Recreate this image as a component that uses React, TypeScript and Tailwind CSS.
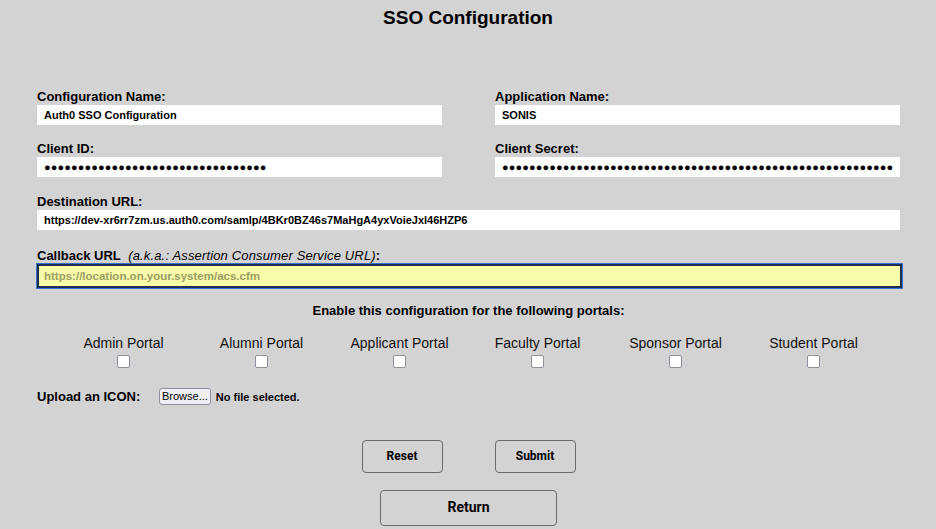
import { useState } from "react";

const portals = [
  "Admin Portal",
  "Alumni Portal",
  "Applicant Portal",
  "Faculty Portal",
  "Sponsor Portal",
  "Student Portal",
];

const labelCls = "block h-4 text-[13px] leading-4 font-bold text-black";
const inputCls =
  "block w-full h-5 bg-white px-[7px] text-[11px] font-bold text-black outline-none font-['Liberation_Sans',Arial,sans-serif]";

function Field({
  label,
  value,
  secret = false,
}: {
  label: string;
  value: string;
  secret?: boolean;
}) {
  return (
    <div>
      <label className={labelCls}>{label}</label>
      <input
        type="text"
        defaultValue={value}
        className={secret ? inputCls + " tracking-[0.1px]" : inputCls}
      />
    </div>
  );
}

export default function App() {
  const [checked, setChecked] = useState<Record<string, boolean>>({});

  return (
    <div className="min-h-[529px] w-[936px] bg-[#d3d3d3] text-black font-['Liberation_Sans',Arial,sans-serif]">
      <h1 className="h-[37px] pt-[6px] text-center text-[19px] leading-6 font-bold">
        SSO Configuration
      </h1>

      <div className="pl-[37px] pr-[36px] pt-[52px]">
        <div className="grid grid-cols-2 gap-x-[53px] gap-y-4">
          <Field label="Configuration Name:" value="Auth0 SSO Configuration" />
          <Field label="Application Name:" value="SONIS" />
          <Field label="Client ID:" value={"●".repeat(33)} secret />
          <Field label="Client Secret:" value={"●".repeat(58)} secret />
        </div>

        <div className="mt-[17px]">
          <label className={labelCls}>Destination URL:</label>
          <input
            type="text"
            defaultValue="https://dev-xr6rr7zm.us.auth0.com/samlp/4BKr0BZ46s7MaHgA4yxVoieJxl46HZP6"
            className={inputCls}
          />
        </div>

        <div className="mt-[18px]">
          <label className={labelCls}>
            Callback URL{" "}
            <span className="ml-1 font-normal italic text-[13px] tracking-[0.15px]">
              (a.k.a.: Assertion Consumer Service URL)
            </span>
            :
          </label>
          <input
            type="text"
            placeholder="https://location.on.your.system/acs.cfm"
            className="block w-[865px] h-6 bg-[#f8fca8] border-2 border-[#1f2f4f] outline outline-1 outline-[#3a6fd0] px-[5px] text-[11.5px] font-bold text-black placeholder:text-[#9c9c63]"
          />
        </div>

        <p className="mt-[15px] text-center text-[13px] leading-4 font-bold">
          Enable this configuration for the following portals:
        </p>

        <div className="mx-auto mt-[16px] grid w-[828px] grid-cols-6">
          {portals.map((p) => (
            <label key={p} className="flex flex-col items-center">
              <span className="text-[14px] leading-4 text-[#111]">{p}</span>
              <input
                type="checkbox"
                checked={!!checked[p]}
                onChange={() => setChecked((c) => ({ ...c, [p]: !c[p] }))}
                className="mt-[4px] h-[13px] w-[13px] appearance-none rounded-[2px] border border-[#8f8f9d] bg-white"
              />
            </label>
          ))}
        </div>

        <div className="mt-[19px] flex items-center">
          <span className="w-[122px] text-[13px] font-bold">Upload an ICON:</span>
          <button
            type="button"
            className="h-[17px] rounded-[3px] border border-[#8f8f9d] bg-[#f0f0f4] px-[2px] text-[11px] leading-[15px] text-black"
          >
            Browse...
          </button>
          <span className="ml-[5px] text-[11px] font-bold">No file selected.</span>
        </div>

        <div className="mt-[33px] flex justify-center gap-[52px]">
          <button
            type="button"
            className="h-[33px] w-[81px] rounded-[4px] border border-[#6b6b6b] text-[12px] font-bold font-['Roboto',sans-serif]"
          >
            Reset
          </button>
          <button
            type="button"
            className="h-[33px] w-[81px] rounded-[4px] border border-[#6b6b6b] text-[12px] font-bold font-['Roboto',sans-serif]"
          >
            Submit
          </button>
        </div>

        <div className="mt-[17px] flex justify-center">
          <button
            type="button"
            className="h-[36px] w-[177px] rounded-[4px] border border-[#6b6b6b] text-[14px] font-bold font-['Roboto',sans-serif]"
          >
            Return
          </button>
        </div>
      </div>
    </div>
  );
}
